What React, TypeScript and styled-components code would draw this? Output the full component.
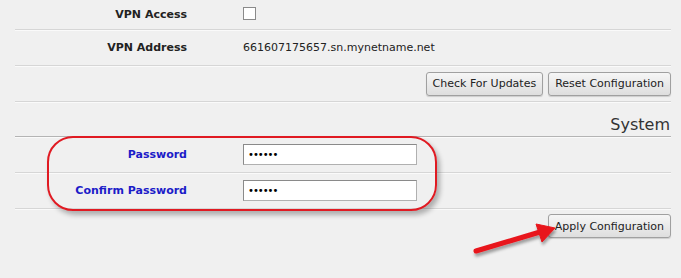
import React from 'react';
import styled, { createGlobalStyle } from 'styled-components';

const GlobalStyle = createGlobalStyle`
    html, body {
        margin: 0;
        padding: 0;
        background: #f0f0f0;
    }
    body {
        font-family: "DejaVu Sans", Verdana, sans-serif;
        font-size: 11px;
        color: #222;
    }
`

const Page = styled.div`
    position: relative;
    width: 681px;
    height: 278px;
    overflow: hidden;
    box-sizing: border-box;
    padding: 0 10px 0 15px;
`

const Row = styled.div<{ $height: number, $dark?: boolean }>`
    box-sizing: border-box;
    height: ${props => props.$height}px;
    display: grid;
    grid-template-columns: 172px 1fr;
    column-gap: 56px;
    align-items: center;
    border-bottom: 1px solid ${props => props.$dark ? '#b4b4b4' : '#d6d6d6'};
    box-shadow: 0 1px 0 #fafafa;
`

const Label = styled.div<{ $blue?: boolean }>`
    text-align: right;
    font-weight: bold;
    font-size: 11px;
    color: ${props => props.$blue ? '#1c1cc8' : '#222'};
`

const Value = styled.div`
    font-size: 11px;
    color: #222;
`

const CheckBox = styled.span`
    display: block;
    box-sizing: border-box;
    width: 13px;
    height: 13px;
    margin-top: -2px;
    background: #fff;
    border: 1px solid #8a8a8a;
`

const ButtonRow = styled.div<{ $height: number, $top?: number, $line?: boolean }>`
    box-sizing: border-box;
    height: ${props => props.$height}px;
    display: flex;
    justify-content: flex-end;
    align-items: ${props => props.$top ? 'flex-start' : 'center'};
    padding-top: ${props => props.$top ?? 0}px;
    gap: 5px;
    border-bottom: ${props => props.$line ? '1px solid #d6d6d6' : 'none'};
    box-shadow: ${props => props.$line ? '0 1px 0 #fafafa' : 'none'};
`

const Button = styled.button`
    font-family: "DejaVu Sans", Verdana, sans-serif;
    font-size: 11px;
    color: #222;
    height: 24px;
    padding: 0 6px;
    border: 1px solid #a0a0a0;
    border-radius: 3px;
    background: linear-gradient(#f6f6f6, #dedede);
    box-shadow: 0 1px 1px rgba(0,0,0,0.15);
`

const SectionTitle = styled.div`
    box-sizing: border-box;
    height: 35px;
    display: flex;
    justify-content: flex-end;
    align-items: flex-end;
    padding: 0 1px 2px 0;
    font-size: 16px;
    color: #333;
    border-bottom: 1px solid #b4b4b4;
    box-shadow: 0 1px 0 #fafafa;
`

const PasswordInput = styled.input`
    box-sizing: border-box;
    width: 174px;
    height: 21px;
    margin: 0;
    padding: 0 4px;
    font-family: "DejaVu Sans", Verdana, sans-serif;
    font-size: 10px;
    letter-spacing: -1px;
    color: #000;
    background: #fff;
    border: 1px solid #8a8a8a;
    border-right-color: #b0b0b0;
    border-bottom-color: #b0b0b0;
    outline: none;
`

const Highlight = styled.div`
    position: absolute;
    left: 47px;
    top: 136px;
    width: 390px;
    height: 75px;
    box-sizing: border-box;
    border: 2px solid #e01a22;
    border-radius: 26px;
    box-shadow: 3px 4px 5px rgba(0,0,0,0.28);
    pointer-events: none;
`

const Arrow = styled.svg`
    position: absolute;
    left: 460px;
    top: 215px;
    width: 110px;
    height: 50px;
    overflow: visible;
    pointer-events: none;
`

function ArrowMark() {
    return (
        <Arrow viewBox="0 0 110 50">
            <defs>
                <filter id="arrowShadow" x="-20%" y="-40%" width="140%" height="180%">
                    <feDropShadow dx="1" dy="3" stdDeviation="1.6" floodColor="#000" floodOpacity="0.35" />
                </filter>
            </defs>
            <g filter="url(#arrowShadow)" fill="#e8141c" stroke="#e8141c">
                <line x1="16" y1="36" x2="80" y2="17" strokeWidth="5" strokeLinecap="round" />
                <polygon points="95,13 76,9 82,27" strokeWidth="1" strokeLinejoin="round" />
            </g>
        </Arrow>
    )
}

export default function App() {
    return (
        <>
            <GlobalStyle />
            <Page>
                <Row $height={30}>
                    <Label>VPN Access</Label>
                    <CheckBox />
                </Row>
                <Row $height={36}>
                    <Label>VPN Address</Label>
                    <Value>661607175657.sn.mynetname.net</Value>
                </Row>
                <ButtonRow $height={36} $line>
                    <Button>Check For Updates</Button>
                    <Button>Reset Configuration</Button>
                </ButtonRow>
                <SectionTitle>System</SectionTitle>
                <Row $height={36}>
                    <Label $blue>Password</Label>
                    <PasswordInput type="password" defaultValue="secret" />
                </Row>
                <Row $height={36}>
                    <Label $blue>Confirm Password</Label>
                    <PasswordInput type="password" defaultValue="secret" />
                </Row>
                <ButtonRow $height={60} $top={5}>
                    <Button>Apply Configuration</Button>
                </ButtonRow>
                <Highlight />
                <ArrowMark />
            </Page>
        </>
    )
}
